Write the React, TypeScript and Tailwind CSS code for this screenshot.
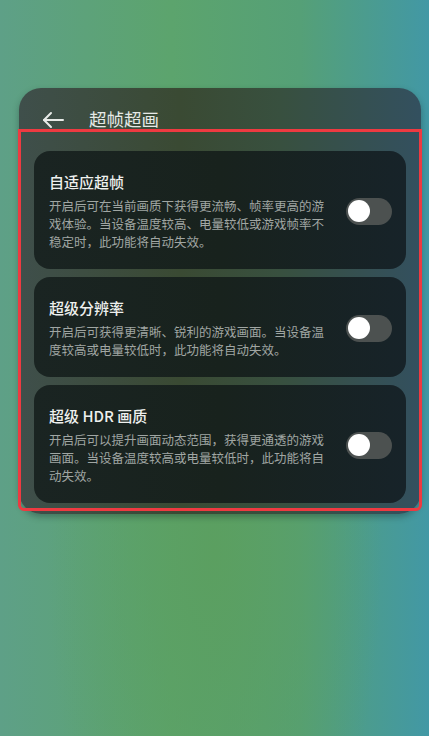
import React from 'react'

type Feature = {
  title: string
  desc: string
}

const features: Feature[] = [
  {
    title: '自适应超帧',
    desc: '开启后可在当前画质下获得更流畅、帧率更高的游戏体验。当设备温度较高、电量较低或游戏帧率不稳定时，此功能将自动失效。',
  },
  {
    title: '超级分辨率',
    desc: '开启后可获得更清晰、锐利的游戏画面。当设备温度较高或电量较低时，此功能将自动失效。',
  },
  {
    title: '超级 HDR 画质',
    desc: '开启后可以提升画面动态范围，获得更通透的游戏画面。当设备温度较高或电量较低时，此功能将自动失效。',
  },
]

const Toggle: React.FC = () => {
  return (
    <div className="w-[46px] h-[27px] rounded-full bg-[#4c5150] flex items-center px-[2px] shrink-0">
      <div className="w-[22px] h-[22px] rounded-full bg-white" />
    </div>
  )
}

const FeatureCard: React.FC<{ item: Feature }> = ({ item }) => {
  return (
    <div className="flex items-center justify-between rounded-[16px] bg-[linear-gradient(90deg,#1a2422_0%,#18221d_50%,#172329_100%)] pl-[15px] pr-[14px] pt-[20px] pb-[18px]">
      <div className="w-[282px]">
        <div className="text-[15px] leading-[22px] font-medium text-[#eef0ee]">{item.title}</div>
        <p className="mt-[4px] text-[12.5px] leading-[18px] text-[#a0a6a3]">{item.desc}</p>
      </div>
      <Toggle />
    </div>
  )
}

export default function App() {
  return (
    <div
      className="min-h-[736px] w-full overflow-hidden pt-[88px] bg-[radial-gradient(ellipse_at_50%_75%,#5b9f60_0%,rgba(91,159,96,0)_55%),linear-gradient(90deg,#5ea087_0%,#5ca46d_40%,#55a077_70%,#4298a5_100%)]"
      style={{ fontFamily: '"Noto Sans CJK SC", "Noto Sans", sans-serif' }}
    >
      <div className="ml-[19px] mr-[8px] rounded-[22px] bg-[linear-gradient(90deg,#3f4f4b_0%,#3a4a33_40%,#38503f_65%,#33505f_100%)] pb-[3px] shadow-[0_3px_6px_rgba(20,40,40,0.35)]">
        <div className="flex items-start h-[41px] pt-[20px] pl-[23px]">
          <svg width="22" height="20" viewBox="0 0 22 20" fill="none" stroke="#e8ebe8" strokeWidth="2" strokeLinecap="round" strokeLinejoin="round" className="mt-[2px]">
            <path d="M21 10H2" />
            <path d="M9 3L2 10l7 7" />
          </svg>
          <span className="ml-[25px] text-[17.5px] leading-[22px] text-[#e6e9e6]">超帧超画</span>
        </div>
        <div className="-mx-[1px] border-[3px] border-[#ee3a41] rounded-b-[6px] pt-[19px] pl-[13px] pr-[13px] pb-[5px] flex flex-col gap-[8px]">
          {features.map((f) => (
            <FeatureCard key={f.title} item={f} />
          ))}
        </div>
      </div>
    </div>
  )
}
